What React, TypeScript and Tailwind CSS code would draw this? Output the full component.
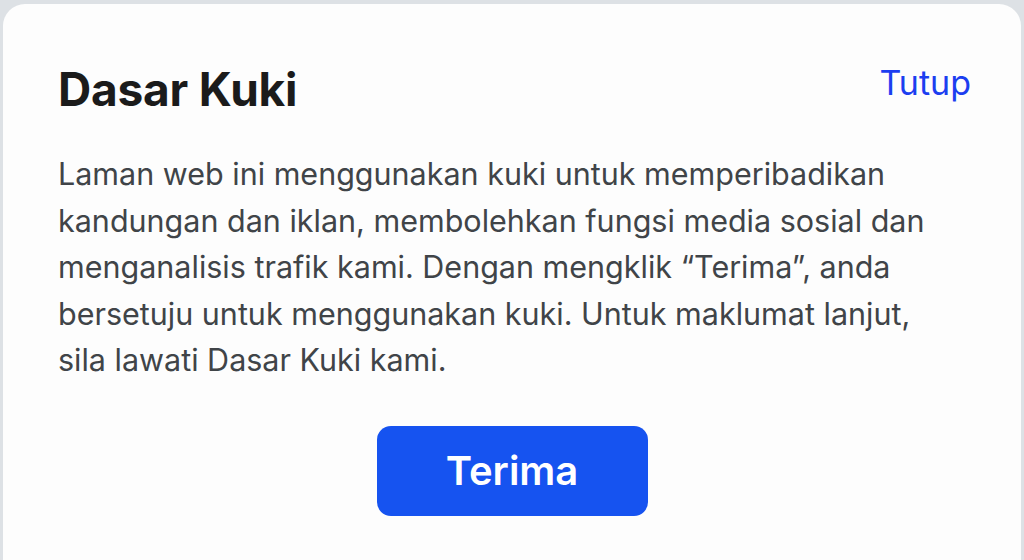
export default function App() {
  return (
    <div
      className="h-[560px] w-[1024px] overflow-hidden bg-[#dde1e5] pl-[3px] pr-[3px] pt-[4px]"
      style={{ fontFamily: 'Inter, "Noto Sans", sans-serif' }}
    >
      <div className="h-[600px] rounded-[22px] bg-[#fdfdfd] pl-[55px] pr-[50px] pt-[56px]">
        {/* Header */}
        <div className="flex items-start justify-between">
          <h1 className="text-[46px] font-bold leading-[58px] tracking-[-0.2px] text-[#1b1b1b]">Dasar Kuki</h1>
          <button className="-mt-[4px] text-[34px] leading-[54px] text-[#1c3ef0]">Tutup</button>
        </div>

        {/* Body */}
        <p className="mt-[33px] max-w-[880px] text-[30.5px] leading-[46.5px] text-[#404448]">
          Laman web ini menggunakan kuki untuk memperibadikan kandungan dan iklan, membolehkan fungsi media sosial dan
          menganalisis trafik kami. Dengan mengklik “Terima”, anda bersetuju untuk menggunakan kuki. Untuk maklumat
          lanjut, sila lawati Dasar Kuki kami.
        </p>

        {/* Action */}
        <div className="mt-[42px] flex justify-center pr-[5px]">
          <button className="h-[90px] w-[271px] rounded-[14px] bg-[#1653f0] text-[40px] font-semibold text-white">
            Terima
          </button>
        </div>
      </div>
    </div>
  )
}
